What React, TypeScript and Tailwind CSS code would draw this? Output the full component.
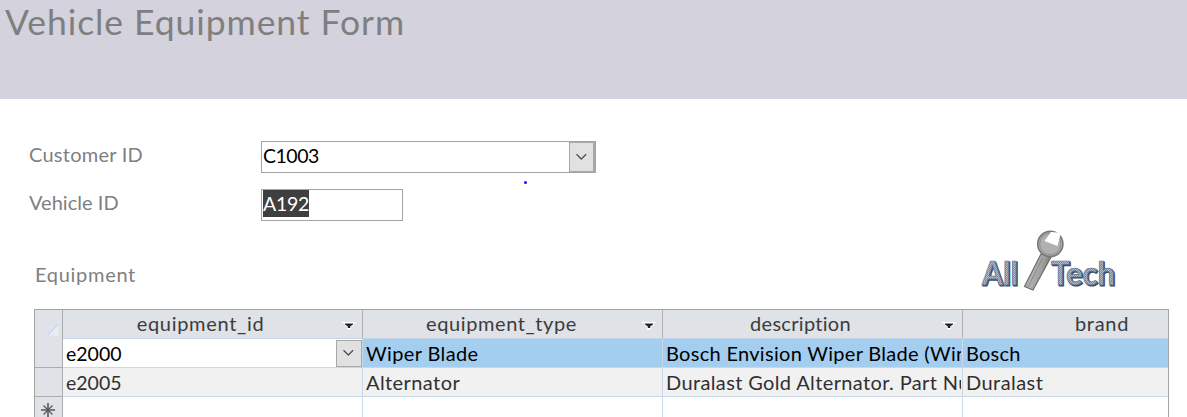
import { ReactNode } from "react";

function Chevron() {
  return (
    <svg width="13" height="8" viewBox="0 0 13 8" fill="none" className="block">
      <path d="M1.5 1.2 L6.3 6 L11.1 1.2" stroke="#505050" strokeWidth="1.3" />
    </svg>
  );
}

function SortArrow() {
  return (
    <svg width="14" height="8" viewBox="0 0 14 8" className="block">
      <path d="M0 .5H13.5" stroke="#fff" />
      <path d="M2.5 1H11.5V3.5L9 5V7.5H5V5L3 3.5Z" fill="#fff" />
      <path d="M3 1.5H11V2.5L8.2 4.5V6H5.8V4.5L3 2.5Z" fill="#20242c" />
    </svg>
  );
}

function Logo() {
  return (
    <svg width="148" height="64" viewBox="0 0 148 64" className="block">
      <defs>
        <pattern id="hatch" width="2" height="2" patternUnits="userSpaceOnUse">
          <rect width="2" height="2" fill="#aebccd" />
          <rect width="1" height="1" fill="#71849d" />
          <rect x="1" y="1" width="1" height="1" fill="#8496ae" />
        </pattern>
        <linearGradient id="steel" x1="0" y1="0" x2="1" y2="0.35">
          <stop offset="0" stopColor="#858585" />
          <stop offset=".4" stopColor="#b4b4b4" />
          <stop offset=".7" stopColor="#a0a0a0" />
          <stop offset="1" stopColor="#707070" />
        </linearGradient>
      </defs>
      <g fontFamily="Lato, sans-serif" fontWeight="700" fontSize="32">
        <g fill="#3c4c64" stroke="#3c4c64" strokeWidth="1.2">
          <text x="8" y="58" textLength="36" lengthAdjust="spacingAndGlyphs">All</text>
          <text x="77" y="58" textLength="64" lengthAdjust="spacingAndGlyphs">Tech</text>
        </g>
        <g fill="url(#hatch)" stroke="#5c6f8a" strokeWidth=".7">
          <text x="7" y="57" textLength="36" lengthAdjust="spacingAndGlyphs">All</text>
          <text x="76" y="57" textLength="64" lengthAdjust="spacingAndGlyphs">Tech</text>
        </g>
      </g>
      <path d="M66 26L49.5 58.5L58 62L76 29Z" fill="url(#steel)" stroke="#6e6e6e" strokeWidth="1.2" />
      <path d="M67.5 30L53 59" stroke="#888" strokeWidth="1" />
      <circle cx="75.3" cy="16" r="12.6" fill="#b0b0b0" stroke="#777" strokeWidth="1.6" />
      <circle cx="75.3" cy="16" r="10.6" fill="none" stroke="#8e8e8e" strokeWidth="1" />
      <path d="M76 4L69.5 13L82.5 18L85.5 6L82.5 4.5Z" fill="#fff" />
    </svg>
  );
}

function HeaderCell({ children, arrow = true, className = "" }: { children: ReactNode; arrow?: boolean; className?: string }) {
  return (
    <div className={`flex h-[29px] items-center border-b border-[#c6d6e6] bg-[#dfe2e7] text-[#3c3c3c] ${className}`}>
      <span className="grow whitespace-nowrap pb-[2px] text-center">{children}</span>
      {arrow && <span className="mt-[3px] mr-[6px] ml-[9px]"><SortArrow /></span>}
    </div>
  );
}

function Cell({ children, className = "" }: { children?: ReactNode; className?: string }) {
  return (
    <div className={`flex h-[29px] items-center overflow-hidden whitespace-nowrap border-b border-[#c9d8e7] pl-[3px] ${className}`}>
      {children}
    </div>
  );
}

const line = "border-r border-r-[#c9d8e7]";
const headLine = "border-r border-r-[#b0b2b6]";

export default function App() {
  return (
    <div className="h-[417px] w-[1187px] overflow-hidden bg-white font-['Lato',sans-serif] text-[20px] leading-[24px]">
      <header className="h-[99px] bg-[#d4d2dc] pl-[5px]">
        <h1 className="w-fit text-[35.5px] leading-[43px] tracking-[0.93px] text-[#7f7f7f]">Vehicle Equipment Form</h1>
      </header>

      <main className="relative pt-[42px]">
        <div className="flex h-[32px]">
          <label className="ml-[29px] w-[232px] pt-px tracking-[0.25px] text-[#7f7f7f]">Customer ID</label>
          <div className="flex h-[32px] w-[335px] border border-[#a3a3a3] text-black">
            <span className="grow pt-[2px] pl-[1px] text-[19.5px] tracking-[-0.5px]">C1003</span>
            <div className="flex w-[26px] items-center justify-center border border-r-2 border-[#a8a8a8] bg-[#e1e1e1]"><Chevron /></div>
          </div>
        </div>
        <div className="mt-[16px] flex h-[32px]">
          <label className="ml-[29px] w-[232px] pt-px tracking-[0.03px] text-[#7f7f7f]">Vehicle ID</label>
          <div className="h-[32px] w-[142px] border border-[#a3a3a3] pl-[2px]">
            <span className="-ml-px block h-[27px] w-[46px] bg-[#3f3f3f] pt-[2px] text-[19.5px] tracking-[-0.3px] text-white">A192</span>
          </div>
        </div>
        <span className="absolute top-[82px] left-[524px] size-[3px] rounded-full bg-[#1010ff]" />

        <div className="flex h-[88px] justify-between">
          <h2 className="pt-[41px] pl-[35px] tracking-[0.7px] text-[#7f7f7f]">Equipment</h2>
          <div className="mr-[64px] pt-[7px]"><Logo /></div>
        </div>

        <div className="ml-[34px] flex h-[120px] w-[1135px] border border-b-0 border-[#a3a3a3]">
          <div className="flex w-[28px] flex-col border-r border-[#a9abae] bg-[#dfe2e7]">
            <div className="flex h-[58px] justify-end border-b border-[#a9abae] pt-[14px] pr-[3px]">
              <svg width="12" height="12" viewBox="0 0 12 12"><path d="M.5 11.5L11.5.5V11.5Z" fill="#ebedf1" /><path d="M.5 11.5L11.5.5" stroke="#b5cfee" /></svg>
            </div>
            <div className="h-[29px] border-b border-[#a9abae]" />
            <div className="flex justify-center pt-[6px] pr-px">
              <svg width="14" height="14" viewBox="0 0 14 14" stroke="#555" strokeWidth="1.6"><path d="M7 0V14M0 7H14" /><path d="M2.5 2.5L11.5 11.5M11.5 2.5L2.5 11.5" strokeWidth="1.2" /></svg>
            </div>
          </div>
          <div className="grid grow grid-cols-[300px_300px_300px_205px] content-start">
            <HeaderCell className={`${headLine} pl-[5px] tracking-[0.7px]`}>equipment_id</HeaderCell>
            <HeaderCell className={`${headLine} pl-[7px] tracking-[0.6px]`}>equipment_type</HeaderCell>
            <HeaderCell className={`${headLine} pl-[5px] tracking-[0.3px]`}>description</HeaderCell>
            <HeaderCell arrow={false} className="pl-[73px] tracking-[0.7px]">brand</HeaderCell>

            <Cell className={`${line} text-black`}>
              <span className="grow pt-[2px] text-[19.5px]">e2000</span>
              <div className="flex h-[27px] w-[26px] items-center justify-center border border-[#a8a8a8] bg-[#e1e1e1] pr-px"><Chevron /></div>
            </Cell>
            <Cell className={`${line} bg-[#a4cef0] tracking-[0.38px] text-black`}>Wiper Blade</Cell>
            <Cell className={`${line} bg-[#a4cef0] tracking-[0.3px] text-black`}><span className="w-[295px] shrink-0 overflow-hidden">Bosch Envision Wiper Blade (Win</span></Cell>
            <Cell className="bg-[#a4cef0] tracking-[0.2px] text-black">Bosch</Cell>

            <Cell className={`${line} bg-[#f1f1f1] pt-[2px] text-[19.5px] text-[#303030]`}>e2005</Cell>
            <Cell className={`${line} bg-[#f1f1f1] tracking-[0.42px] text-[#303030]`}>Alternator</Cell>
            <Cell className={`${line} bg-[#f1f1f1] tracking-[0.37px] text-[#303030]`}><span className="w-[295px] shrink-0 overflow-hidden">Duralast Gold Alternator. Part Nu</span></Cell>
            <Cell className="bg-[#f1f1f1] tracking-[0.45px] text-[#303030]">Duralast</Cell>

            <Cell className={line} />
            <Cell className={line} />
            <Cell className={line} />
            <Cell />
          </div>
        </div>
      </main>
    </div>
  );
}
